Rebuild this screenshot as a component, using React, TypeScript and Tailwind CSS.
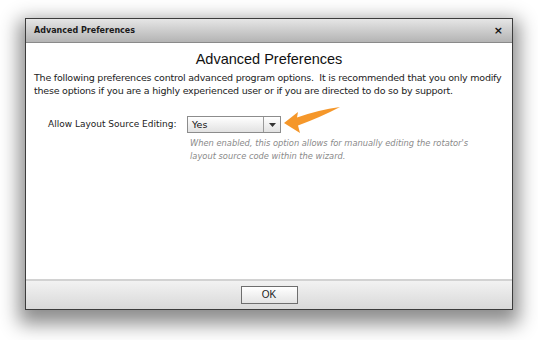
export default function App() {
  return (
    <div className="w-[538px] h-[340px] bg-white pt-[18px] pl-[25px]" style={{ fontFamily: '"DejaVu Sans", Verdana, sans-serif' }}>
      <div className="w-[488px] h-[292px] border border-[#3c3c3c] flex flex-col bg-white shadow-[0_8px_18px_6px_rgba(0,0,0,0.45)]">
        <div className="h-[24px] shrink-0 flex items-center justify-between pl-[8px] pr-[9px] border-b border-[#8a8a8a] bg-gradient-to-b from-[#e6e6e6] to-[#b4b4b4]">
          <span className="text-[8px] font-bold text-[#1a1a1a]">Advanced Preferences</span>
          <span className="text-[11px] font-bold text-[#111] leading-none">×</span>
        </div>
        <div className="flex-1 px-[8px]">
          <h1 className="text-center text-[14.5px] text-[#111] mt-[7px] leading-[18px]" style={{ fontFamily: '"Liberation Sans", Arial, sans-serif' }}>
            Advanced Preferences
          </h1>
          <p className="text-[9.5px] leading-[13px] text-[#222] mt-[3px] whitespace-nowrap tracking-[-0.22px]">
            The following preferences control advanced program options.&nbsp; It is recommended that you only modify
            <br />
            these options if you are a highly experienced user or if you are directed to do so by support.
          </p>
          <div className="flex items-start mt-[19px] pl-[14px]">
            <div className="w-[139px] text-[9px] text-[#222] leading-[17px] whitespace-nowrap">Allow Layout Source Editing:</div>
            <div className="flex flex-col">
              <div className="flex items-start">
                <div className="w-[94px] h-[17px] border border-[#8c8c8c] flex bg-gradient-to-b from-[#ffffff] to-[#e2e2e2]">
                  <span className="flex-1 text-[9.5px] text-[#111] pl-[4px] leading-[15px]">Yes</span>
                  <span className="w-[17px] border-l border-[#9a9a9a] flex items-center justify-center">
                    <svg width="7" height="4" viewBox="0 0 7 4"><path d="M0 0h7L3.5 4z" fill="#333" /></svg>
                  </span>
                </div>
                <svg width="60" height="28" viewBox="0 0 60 28" className="ml-[1px] -mt-[11px]">
                  <path d="M2 18 L16 7 L15 12.5 Q36 5 58 2 Q39 12 16 20.5 L18 28 Z" fill="#f5972a" />
                </svg>
              </div>
              <p className="text-[8.3px] italic text-[#8a8a8a] leading-[13px] mt-[4px] pl-[3px] whitespace-nowrap">
                When enabled, this option allows for manually editing the rotator's
                <br />
                layout source code within the wizard.
              </p>
            </div>
          </div>
        </div>
        <div className="h-[30px] shrink-0 border-t-2 border-[#d2d2d2] bg-gradient-to-b from-[#f2f2f2] to-[#d9d9d9] flex items-center justify-center">
          <button className="w-[57px] h-[18px] border border-[#6e6e6e] bg-gradient-to-b from-[#ffffff] to-[#e4e4e4] text-[10px] text-[#222] leading-none" style={{ fontFamily: '"Liberation Sans", Arial, sans-serif' }}>
            OK
          </button>
        </div>
      </div>
    </div>
  );
}
